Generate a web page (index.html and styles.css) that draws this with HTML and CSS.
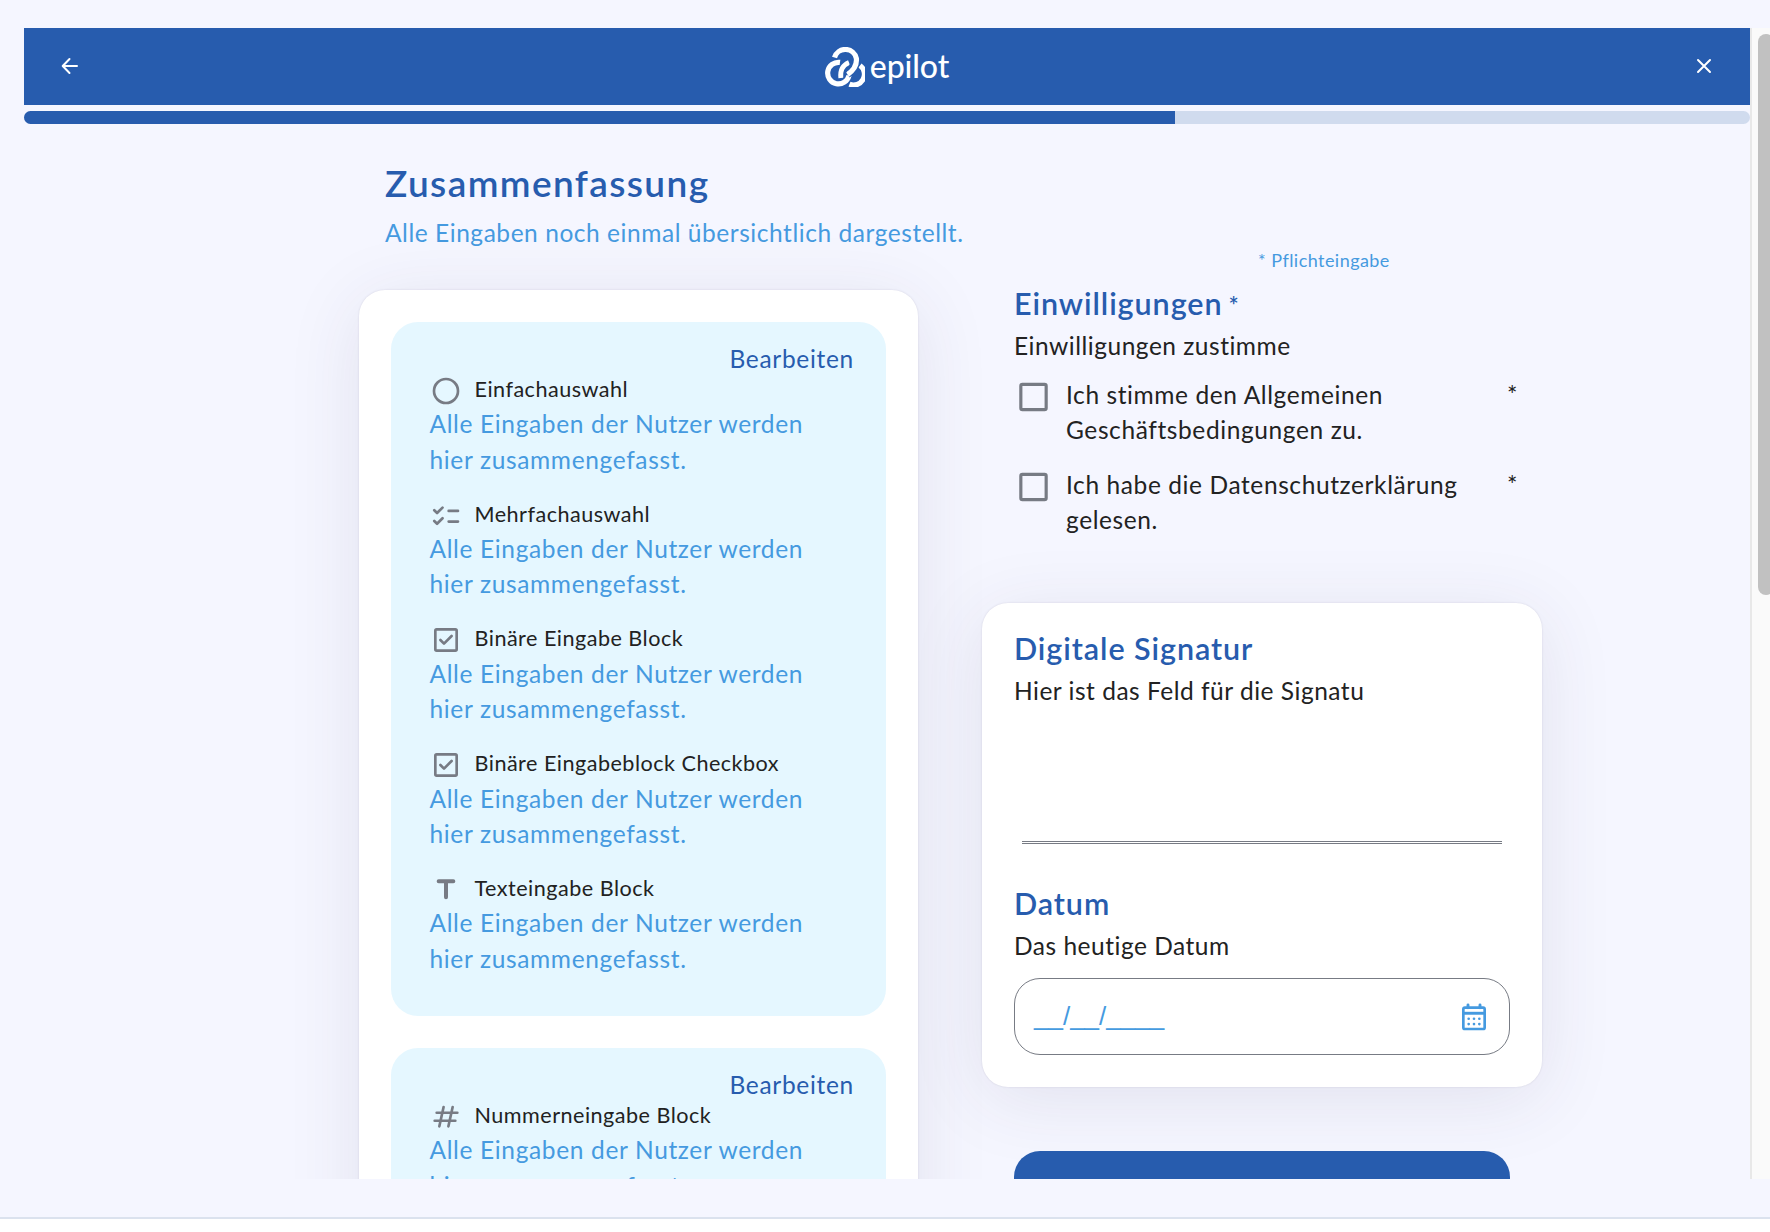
FILE: index.html
```html
<!DOCTYPE html>
<html lang="de">
<head>
<meta charset="utf-8">
<title>Zusammenfassung – epilot</title>
<link rel="stylesheet" href="styles.css">
</head>
<body>
<svg class="defs" aria-hidden="true">
  <symbol id="i-radio" viewBox="0 0 24 24"><circle cx="12" cy="12" r="9" fill="none" stroke="currentColor" stroke-width="2"/></symbol>
  <symbol id="i-list" viewBox="0 0 24 24"><path fill="none" stroke="currentColor" stroke-width="2" stroke-linecap="round" stroke-linejoin="round" d="M3.2 7.7l2.1 2.1L9.4 5.7M3.2 15.7l2.1 2.1L9.4 13.7M14 8.2h7M14 16.2h7"/></symbol>
  <symbol id="i-check" viewBox="0 0 24 24"><rect x="4" y="4" width="16" height="16" rx="1" fill="none" stroke="currentColor" stroke-width="2"/><path fill="none" stroke="currentColor" stroke-width="2" stroke-linecap="round" stroke-linejoin="round" d="M7.8 12l2.7 2.7 5.7-5.7"/></symbol>
  <symbol id="i-title" viewBox="0 0 24 24"><path fill="none" stroke="currentColor" stroke-width="3" stroke-linecap="round" d="M6.5 5.5h11M12 5.5v12"/></symbol>
  <symbol id="i-hash" viewBox="0 0 24 24"><path fill="none" stroke="currentColor" stroke-width="2" stroke-linecap="round" d="M10.2 4.5L7 19M17 4.5L13.8 19M5 8.8h15.500M3.500 14.800H19"/></symbol>
  <symbol id="i-box" viewBox="0 0 24 24"><rect x="4" y="4" width="16" height="16" rx="1" fill="none" stroke="currentColor" stroke-width="2"/></symbol>
</svg>

<div class="frame">
  <main class="journey">
    <header class="topbar">
      <svg class="nav-icon" viewBox="0 0 24 24"><path d="M19 12H5M11.5 5L4.7 12l6.8 7"/></svg>
      <div class="logo">
        <svg class="logo-mark" viewBox="0 0 40 40">
          <path class="ring" d="M15 15.400A10.800 10.800 0 1 0 24 28.500"/>
          <path class="ring" d="M35 18.500A10.800 10.800 0 0 1 24.500 37.200"/>
          <path class="ring inner" d="M15.800 31Q14.500 19.500 24 15.500"/>
          <path class="case" d="M9.500 10.500A11.300 11.300 0 0 1 31.400 11.500C32 18 29 23 22.500 27.500"/>
          <path class="ring" d="M9.500 10.500A11.300 11.300 0 0 1 31.400 11.500C32 18 29 23 22.500 27.500"/>
          <path class="gap" d="M26 14.500C25.500 20 22 22 19.800 27"/>
        </svg>
        <span class="logo-text">epilot</span>
      </div>
      <svg class="nav-icon" viewBox="0 0 24 24"><path d="M6 6l12 12M18 6L6 18"/></svg>
    </header>
    <div class="progress"><div class="progress-value" style="width:66.67%"></div></div>

    <div class="intro">
      <h1>Zusammenfassung</h1>
      <p>Alle Eingaben noch einmal übersichtlich dargestellt.</p>
    </div>

    <div class="columns">
      <section class="card summary">
        <div class="step">
          <a class="edit">Bearbeiten</a>
          <div class="entry"><div class="label"><svg><use href="#i-radio"/></svg><span>Einfachauswahl</span></div><p>Alle Eingaben der Nutzer werden<br>hier zusammengefasst.</p></div>
          <div class="entry"><div class="label"><svg><use href="#i-list"/></svg><span>Mehrfachauswahl</span></div><p>Alle Eingaben der Nutzer werden<br>hier zusammengefasst.</p></div>
          <div class="entry"><div class="label"><svg><use href="#i-check"/></svg><span>Binäre Eingabe Block</span></div><p>Alle Eingaben der Nutzer werden<br>hier zusammengefasst.</p></div>
          <div class="entry"><div class="label"><svg><use href="#i-check"/></svg><span>Binäre Eingabeblock Checkbox</span></div><p>Alle Eingaben der Nutzer werden<br>hier zusammengefasst.</p></div>
          <div class="entry"><div class="label"><svg><use href="#i-title"/></svg><span>Texteingabe Block</span></div><p>Alle Eingaben der Nutzer werden<br>hier zusammengefasst.</p></div>
        </div>
        <div class="step">
          <a class="edit">Bearbeiten</a>
          <div class="entry"><div class="label"><svg><use href="#i-hash"/></svg><span>Nummerneingabe Block</span></div><p>Alle Eingaben der Nutzer werden<br>hier zusammengefasst.</p></div>
        </div>
      </section>

      <div class="side">
        <p class="required">* Pflichteingabe</p>
        <section class="consents">
          <h2>Einwilligungen<span class="star">*</span></h2>
          <p class="text">Einwilligungen zustimme</p>
          <label class="consent"><svg><use href="#i-box"/></svg><span class="consent-text">Ich stimme den Allgemeinen<br>Geschäftsbedingungen zu.</span><span class="mark">*</span></label>
          <label class="consent"><svg><use href="#i-box"/></svg><span class="consent-text">Ich habe die Datenschutzerklärung<br>gelesen.</span><span class="mark">*</span></label>
        </section>
        <section class="card form">
          <h2>Digitale Signatur</h2>
          <p class="text">Hier ist das Feld für die Signatu</p>
          <div class="signature"></div>
          <h2>Datum</h2>
          <p class="text">Das heutige Datum</p>
          <div class="date">
            <span>__/__/____</span>
            <svg viewBox="0 0 24 24">
              <rect x="4" y="5" width="16" height="16" rx="1.2" fill="none" stroke="currentColor" stroke-width="2"/>
              <path d="M3.500 9.200h17" stroke="currentColor" stroke-width="2.200"/>
              <path d="M7.500 3v2M16.500 3v2" stroke="currentColor" stroke-width="2.200" stroke-linecap="round"/>
              <path d="M8 13.300h.01M12 13.300h.01M16 13.300h.01M8 17.300h.01M12 17.300h.01M16 17.300h.01" stroke="currentColor" stroke-width="2" stroke-linecap="round"/>
            </svg>
          </div>
        </section>
        <div class="submit"></div>
      </div>
    </div>
  </main>
  <div class="scrollbar"><div class="thumb"></div></div>
</div>
</body>
</html>
```
FILE: styles.css
```css
* { box-sizing: border-box; }

body {
  margin: 0;
  height: 1232px;
  overflow: hidden;
  background: #fff;
  font-family: Lato, "Open Sans", sans-serif;
  font-size: 24.5px;
  line-height: 35.2px;
  letter-spacing: 0.6px;
  color: #222;
}

h1, h2, p { margin: 0; }
.defs { display: none; }

.frame {
  display: flex;
  height: 1219px;
  padding: 28px 0 38px;
  background: #f5f6ff;
  border-bottom: 2px solid #dbe2ee;
}

.journey {
  flex: 1;
  height: 1151px;
  padding-left: 24px;
  overflow: hidden;
}

.scrollbar {
  width: 20px;
  height: 1151px;
  padding: 6px 0 0 6px;
  border-left: 2px solid #e8e8e8;
  background: #fafafa;
  overflow: hidden;
}
.thumb {
  width: 16px;
  height: 561px;
  border-radius: 8px;
  background: #c1c1c1;
}

.topbar {
  display: flex;
  align-items: center;
  justify-content: space-between;
  height: 77px;
  padding: 0 34px 1px;
  background: #275cae;
  color: #fff;
}
.nav-icon {
  width: 24px;
  height: 24px;
  fill: none;
  stroke: currentColor;
  stroke-width: 2;
  stroke-linecap: round;
  stroke-linejoin: round;
}
.logo { display: flex; align-items: center; gap: 5px; }
.logo-mark { width: 40px; height: 40px; margin-top: 2px; }
.ring { fill: none; stroke: #fff; stroke-width: 5.2; }
.inner { stroke-width: 4.8; }
.case { fill: none; stroke: #275cae; stroke-width: 7.5; }
.gap { fill: none; stroke: #275cae; stroke-width: 1.2; }
.logo-text {
  font-size: 32px;
  line-height: 40px;
  font-weight: 500;
  letter-spacing: -0.1px;
}

.progress {
  height: 13px;
  margin-top: 6px;
  border-radius: 7px;
  background: #d0dbee;
  overflow: hidden;
}
.progress-value { height: 13px; background: #275cae; }

.intro { padding: 37px 0 0 361px; }
h1 {
  font-size: 37px;
  line-height: 44px;
  font-weight: 600;
  letter-spacing: 1.4px;
  color: #275cae;
}
.intro p {
  margin-top: 12px;
  line-height: 31px;
  letter-spacing: 0.55px;
  color: #459ae0;
}

.columns {
  display: flex;
  align-items: flex-start;
  gap: 64px;
  padding-left: 335px;
}
.card {
  border-radius: 26px;
  background: #fff;
  box-shadow: 0 0 2px rgba(60, 50, 90, 0.15), 0 12px 75px rgba(60, 50, 90, 0.1);
}

.summary {
  display: flex;
  flex-direction: column;
  gap: 32px;
  width: 559px;
  margin-top: 42px;
  padding: 32px;
}
.step {
  height: 694px;
  padding: 20.8px 32px 40px 38.5px;
  border-radius: 27px;
  background: #e5f7ff;
}
.edit {
  display: block;
  line-height: 32px;
  letter-spacing: 0.7px;
  text-align: right;
  color: #275cae;
}
.entry { margin-bottom: 22.9px; }
.label { display: flex; gap: 13px; height: 32px; }
.label svg { width: 32px; height: 32px; color: #777b84; }
.label span {
  font-size: 21.6px;
  line-height: 28px;
  letter-spacing: 0.48px;
}
.entry p {
  margin-top: -0.5px;
  letter-spacing: 0.65px;
  color: #459ae0;
}

.side { width: 560px; }
.required {
  padding-left: 276px;
  font-size: 18px;
  line-height: 24px;
  letter-spacing: 0.45px;
  color: #459ae0;
}
.consents { padding: 13px 24px 65.5px 32px; }
h2 {
  font-size: 30.5px;
  line-height: 36px;
  font-weight: 600;
  letter-spacing: 0.93px;
  color: #275cae;
}
.star {
  margin-left: 6px;
  font-size: 24px;
  line-height: 0;
  letter-spacing: 0;
}
.text { margin-top: 7px; line-height: 35px; letter-spacing: 0.51px; }
.consent {
  display: flex;
  margin-top: 14px;
  line-height: 35px;
}
.consent + .consent { margin-top: 20px; }
.consent svg { width: 39px; height: 38px; margin-top: 1px; color: #777b84; }
.consent-text { flex: 1; margin-left: 13px; }

.form { padding: 27px 32px 32px; }
.signature {
  height: 3px;
  margin: 133px 8px 41px;
  border: solid #777b84;
  border-width: 1px 0;
}
.date {
  display: flex;
  align-items: center;
  justify-content: space-between;
  height: 77px;
  margin-top: 15.5px;
  padding: 0 19px;
  border: 1px solid #777b84;
  border-radius: 26px;
  color: #459ae0;
}
.date span {
  font-family: "Liberation Sans", sans-serif;
  font-size: 26px;
  letter-spacing: 0;
}
.date svg { width: 32px; height: 32px; }

.submit {
  height: 77px;
  margin: 64px 32px 0;
  border-radius: 26px;
  background: #275cae;
}
```
